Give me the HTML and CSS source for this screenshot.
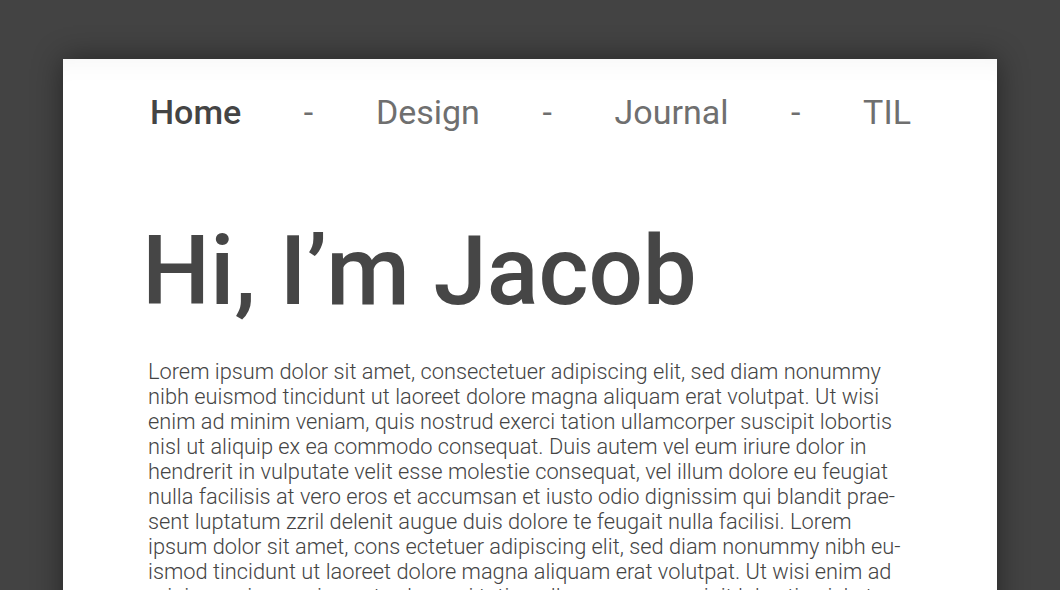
FILE: index.html
```html
<!DOCTYPE html>
<html lang="en">
<head>
<meta charset="utf-8">
<title>Jacob</title>
<link rel="stylesheet" href="styles.css">
</head>
<body>
<main class="card">
  <nav class="nav">
    <a class="nav-link active" href="#">Home</a>
    <span class="sep">-</span>
    <a class="nav-link" href="#">Design</a>
    <span class="sep">-</span>
    <a class="nav-link" href="#">Journal</a>
    <span class="sep">-</span>
    <a class="nav-link" href="#">TIL</a>
  </nav>
  <h1 class="title">Hi, I’m Jacob</h1>
  <p class="intro">Lorem ipsum dolor sit amet, consectetuer adipiscing elit, sed diam nonummy nibh euismod tincidunt ut laoreet dolore magna aliquam erat volutpat. Ut wisi enim ad minim veniam, quis nostrud exerci tation ullamcorper suscipit lobortis nisl ut aliquip ex ea commodo consequat. Duis autem vel eum iriure dolor in hendrerit in vulputate velit esse molestie consequat, vel illum dolore eu feugiat nulla facilisis at vero eros et accumsan et iusto odio dignissim qui blandit prae&shy;sent luptatum zzril delenit augue duis dolore te feugait nulla facilisi. Lorem ipsum dolor sit amet, cons ectetuer adipiscing elit, sed diam nonummy nibh eu&shy;ismod tincidunt ut laoreet dolore magna aliquam erat volutpat. Ut wisi enim ad minim veniam, quis nostrud exerci tation ullamcorper suscipit lobortis nisl ut aliquip ex ea commodo consequat.</p>
</main>
</body>
</html>
```

FILE: styles.css
```css
html, body {
  margin: 0;
  padding: 0;
}
body {
  background: #434343;
  font-family: Roboto, "Liberation Sans", sans-serif;
  color: #444;
  height: 590px;
  overflow: hidden;
}
.card {
  width: 934px;
  margin: 59px 0 0 63px;
  min-height: 700px;
  background: #fff;
  box-shadow: 0 0 28px rgba(0, 0, 0, 0.45), inset 0 24px 30px -24px rgba(0, 0, 0, 0.05);
  padding: 33px 86px 0 87px;
  box-sizing: border-box;
}
.nav {
  display: flex;
  justify-content: space-between;
  align-items: baseline;
  font-size: 34px;
  line-height: 40px;
}
.nav-link {
  color: #6f6f6f;
  text-decoration: none;
  font-weight: 400;
}
.nav-link.active {
  color: #444;
  font-weight: 500;
}
.sep {
  color: #6f6f6f;
}
.title {
  margin: 91px 0 0 -8px;
  font-size: 96px;
  line-height: 96px;
  font-weight: 500;
  color: #464646;
  letter-spacing: -0.1px;
}
.intro {
  margin: 40px 0 0 -2px;
  font-size: 21.8px;
  line-height: 25px;
  font-weight: 300;
  color: #444;
  hyphens: manual;
}
```
